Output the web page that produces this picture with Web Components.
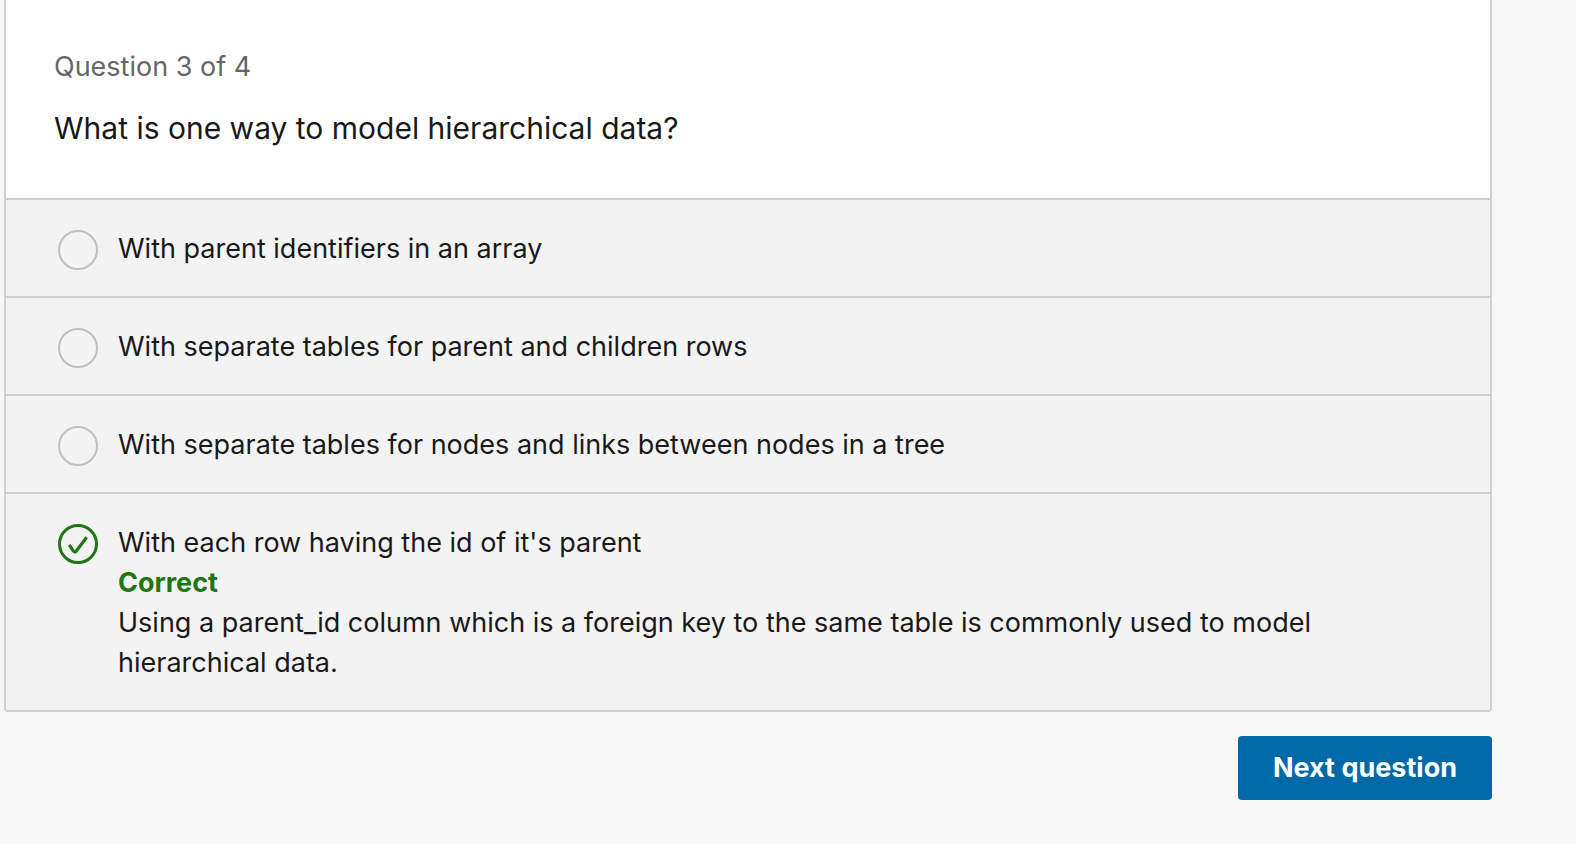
<!DOCTYPE html>
<html lang="en">
<head>
<meta charset="utf-8">
<meta name="viewport" content="width=device-width, initial-scale=1">
<title>Chapter quiz</title>
<style>
  body {
    margin: 0;
    background: #f8f8f8;
    color: #191919;
    font-family: Inter, "Noto Sans", sans-serif;
    font-size: 27px;
    line-height: 40px;
  }
</style>
</head>
<body>
<quiz-page>
  <quiz-card>
    <span slot="progress">Question 3 of 4</span>
    <span slot="question">What is one way to model hierarchical data?</span>
    <quiz-option>With parent identifiers in an array</quiz-option>
    <quiz-option>With separate tables for parent and children rows</quiz-option>
    <quiz-option>With separate tables for nodes and links between nodes in a tree</quiz-option>
    <quiz-option correct>With each row having the id of it's parent
      <span slot="feedback">Using a parent_id column which is a foreign key to the same table is commonly used to model hierarchical data.</span>
    </quiz-option>
  </quiz-card>
  <quiz-button slot="actions">Next question</quiz-button>
</quiz-page>

<template id="page-template">
  <style>
    :host { display: block; padding: 0 84px 24px 4px; }
    footer { display: flex; justify-content: flex-end; margin-top: 24px; }
  </style>
  <main><slot></slot></main>
  <footer><slot name="actions"></slot></footer>
</template>

<template id="card-template">
  <style>
    :host {
      display: block;
      border: 2px solid #d0d0d0;
      border-top: 0;
      border-radius: 0 0 4px 4px;
      background: #fff;
      overflow: hidden;
    }
    header { padding: 47px 48px 49px; }
    p, h1 { margin: 0; font-weight: 400; }
    p { color: #666; }
    h1 { margin-top: 20px; font-size: 30px; line-height: 42px; }
  </style>
  <header>
    <p><slot name="progress"></slot></p>
    <h1><slot name="question"></slot></h1>
  </header>
  <div role="radiogroup" aria-label="Answers"><slot></slot></div>
</template>

<template id="option-template">
  <style>
    :host {
      display: block;
      border-top: 2px solid #d0d0d0;
      background: #f3f3f3;
      padding: 29px 52px 27px;
    }
    .row { display: grid; grid-template-columns: 40px 1fr; column-gap: 20px; }
    .mark { display: grid; margin: 1px 0 -1px; align-self: start; }
    input, svg { grid-area: 1 / 1; width: 40px; height: 40px; }
    input {
      appearance: none;
      box-sizing: border-box;
      margin: 0;
      border: 2px solid #bfbfbf;
      border-radius: 50%;
    }
    svg { display: none; pointer-events: none; }
    :host([correct]) input { border: 3px solid #1f7614; }
    :host([correct]) svg { display: block; }
    label { display: block; }
    .feedback { display: none; }
    :host([correct]) .feedback { display: block; }
    strong { display: block; color: #1f7614; font-weight: 700; }
  </style>
  <div class="row">
    <div class="mark">
      <input type="radio" id="answer">
      <svg viewBox="0 0 40 40" aria-hidden="true"><path d="M11.3 20.8 L15.3 27 Q16.7 29.2 18.3 27 L28.7 13.2" fill="none" stroke="#1f7614" stroke-width="3.2"/></svg>
    </div>
    <div>
      <label for="answer"><slot></slot></label>
      <div class="feedback"><strong>Correct</strong><slot name="feedback"></slot></div>
    </div>
  </div>
</template>

<template id="button-template">
  <style>
    :host { display: block; }
    button {
      border: 0;
      border-radius: 4px;
      padding: 12px 35px;
      background: #0069a8;
      color: #fff;
      font: inherit;
      font-weight: 700;
      cursor: pointer;
    }
  </style>
  <button type="button"><slot></slot></button>
</template>

<script>
  class TemplateElement extends HTMLElement {
    constructor() {
      super();
      const template = document.getElementById(this.constructor.template);
      this.attachShadow({ mode: "open" }).append(template.content.cloneNode(true));
    }
  }

  class QuizPage extends TemplateElement { static template = "page-template"; }
  class QuizButton extends TemplateElement { static template = "button-template"; }

  class QuizOption extends TemplateElement {
    static template = "option-template";
    get input() { return this.shadowRoot.querySelector("input"); }
    connectedCallback() {
      this.input.checked = this.hasAttribute("correct");
      this.input.addEventListener("change", () =>
        this.dispatchEvent(new CustomEvent("option-select", { bubbles: true })));
    }
  }

  class QuizCard extends TemplateElement {
    static template = "card-template";
    connectedCallback() {
      // Radios sit in separate shadow roots, so the card keeps them exclusive.
      this.addEventListener("option-select", (event) => {
        for (const option of this.querySelectorAll("quiz-option")) {
          option.input.checked = option === event.target;
        }
      });
    }
  }

  customElements.define("quiz-page", QuizPage);
  customElements.define("quiz-card", QuizCard);
  customElements.define("quiz-option", QuizOption);
  customElements.define("quiz-button", QuizButton);
</script>
</body>
</html>
